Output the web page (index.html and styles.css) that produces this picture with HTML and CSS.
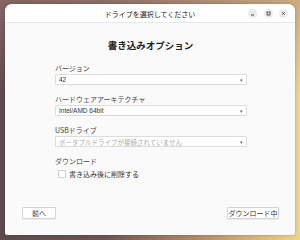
FILE: index.html
```html
<!DOCTYPE html>
<html lang="ja">
<head>
    <meta charset="UTF-8">
    <meta name="viewport" content="width=device-width, initial-scale=1.0">
    <title>ドライブを選択してください</title>
    <link rel="stylesheet" href="styles.css">
</head>
<body>

    <div class="window">
        <div class="titlebar">
            <div></div>
            <div class="title">ドライブを選択してください</div>
            <div class="controls">
                <span class="ctl">
                    <svg width="9" height="9" viewBox="0 0 9 9"><path d="M3 6h3" stroke="#333" stroke-width="0.9"/></svg>
                </span>
                <span class="ctl">
                    <svg width="9" height="9" viewBox="0 0 9 9"><rect x="3" y="3" width="3" height="3" fill="none" stroke="#333" stroke-width="0.8"/></svg>
                </span>
                <span class="ctl">
                    <svg width="9" height="9" viewBox="0 0 9 9"><path d="M3.2 3.2l2.6 2.6M5.8 3.2l-2.6 2.6" stroke="#333" stroke-width="0.8"/></svg>
                </span>
            </div>
        </div>

        <div class="content">
            <h1>書き込みオプション</h1>

            <div class="form">
                <div class="field">
                    <label>バージョン</label>
                    <div class="select"><span>42</span><span class="arrow">▾</span></div>
                </div>
                <div class="field">
                    <label>ハードウェアアーキテクチャ</label>
                    <div class="select"><span>Intel/AMD 64bit</span><span class="arrow">▾</span></div>
                </div>
                <div class="field">
                    <label>USBドライブ</label>
                    <div class="select disabled"><span>ポータブルドライブが接続されていません</span><span class="arrow">▾</span></div>
                </div>
                <div class="field">
                    <label>ダウンロード</label>
                    <div class="check">
                        <span class="box"></span>
                        <span>書き込み後に削除する</span>
                    </div>
                </div>
            </div>

            <div class="footer">
                <button class="btn back">前へ</button>
                <button class="btn next">ダウンロード中</button>
            </div>
        </div>
    </div>

</body>
</html>
```

FILE: styles.css
```css
body {
    margin: 0;
    width: 300px;
    height: 240px;
    overflow: hidden;
    font-family: "Noto Sans CJK JP", "Noto Sans", sans-serif;
    background:
        linear-gradient(to bottom, rgba(170, 130, 120, 0.5), rgba(80, 60, 60, 0) 40%),
        linear-gradient(to right, #5c4a4e 0%, #6e5552 35%, #b08a68 65%, #f0d588 100%);
}
.window {
    margin: 4px 5px 0 5px;
    height: 231px;
    background: #fafafa;
    border-radius: 7px 7px 2px 2px;
    display: flex;
    flex-direction: column;
    overflow: hidden;
    box-shadow: 0 0 3px rgba(0, 0, 0, 0.25);
}
.titlebar {
    height: 18px;
    background: #fff;
    border-bottom: 1px solid #e8e8e8;
    display: grid;
    grid-template-columns: 1fr auto 1fr;
    align-items: center;
}
.title {
    font-size: 7px;
    color: #222;
    padding-top: 1px;
}
.controls {
    display: flex;
    justify-content: flex-end;
    gap: 6.5px;
    padding-right: 7px;
    padding-top: 1px;
}
.ctl {
    width: 9px;
    height: 9px;
    border-radius: 50%;
    background: #ebebeb;
    display: flex;
}
.content {
    flex: 1;
    display: flex;
    flex-direction: column;
    padding: 0 16px 16px 17px;
}
h1 {
    margin: 16px 0 11px 0;
    font-size: 9.5px;
    line-height: 13px;
    text-align: center;
    color: #222;
}
.form {
    width: 192px;
    margin: 0 auto;
    padding-left: 1px;
}
.field {
    margin-bottom: 9px;
}
label {
    display: block;
    font-size: 7px;
    line-height: 10px;
    color: #444;
    margin-bottom: 1px;
}
.select {
    height: 9px;
    border: 1px solid #dcdcdc;
    border-radius: 1px;
    background: #fff;
    display: flex;
    justify-content: space-between;
    align-items: center;
    padding: 0 3px;
    font-family: "Liberation Sans", "Noto Sans CJK JP", sans-serif;
    font-size: 6.5px;
    color: #333;
}
.select.disabled {
    color: #aaa;
    font-family: "Noto Sans CJK JP", sans-serif;
}
.arrow {
    font-size: 5px;
    color: #666;
}
.check {
    display: flex;
    align-items: center;
    gap: 3px;
    margin-top: 3px;
    padding-left: 3px;
    font-size: 7px;
    color: #333;
}
.box {
    width: 6px;
    height: 6px;
    border: 1px solid #cfcfcf;
    border-radius: 1px;
    background: #fff;
}
.footer {
    margin-top: auto;
    display: flex;
    justify-content: space-between;
}
.btn {
    height: 12px;
    padding: 0;
    font-family: "Noto Sans CJK JP", sans-serif;
    font-size: 7px;
    line-height: 10px;
    color: #333;
    background: #fff;
    border: 1px solid #d4d4d4;
    border-radius: 1px;
    box-shadow: 0 1px 0 rgba(0, 0, 0, 0.06);
}
.back {
    width: 34px;
}
.next {
    width: 52px;
    white-space: nowrap;
    overflow: hidden;
}
```
